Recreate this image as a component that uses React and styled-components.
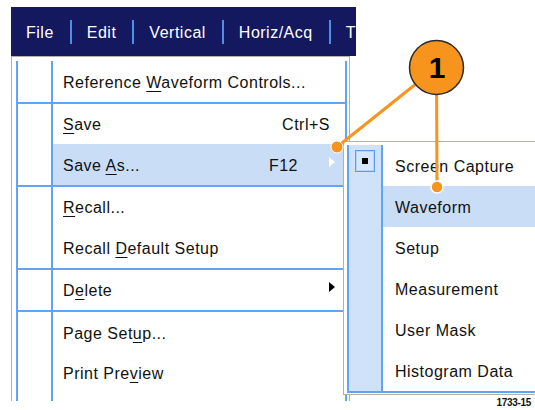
import React from "react";
import styled, { createGlobalStyle } from "styled-components";

const Global = createGlobalStyle`
  body {
    margin: 0;
    background: #fff;
    font-family: "Liberation Sans", Arial, sans-serif;
  }
`;

const NAVY = "#13185f";
const LINE = "#62a4f4";
const FRAME = "#b5b1a7";
const HILITE = "#c9ddf7";
const ORANGE = "#f7941d";

const Stage = styled.div`
  position: relative;
  width: 535px;
  height: 410px;
  overflow: hidden;
  padding-top: 7px;
  box-sizing: border-box;
  background: #fff;
`;

const Menubar = styled.div`
  margin-left: 11px;
  width: 345px;
  height: 49px;
  box-sizing: border-box;
  padding: 2px 0 0 15px;
  background: ${NAVY};
  display: flex;
  align-items: center;
  overflow: hidden;
  white-space: nowrap;
  color: #fff;
  font-size: 16px;
  letter-spacing: 0.5px;
`;

const BarSep = styled.span`
  flex: none;
  width: 2px;
  height: 24px;
  margin: -2px 15px 0 16px;
  background: #4d8fe8;
`;

const Menu = styled.div`
  margin-left: 11px;
  width: 339px;
  box-sizing: border-box;
  border: 1px solid ${FRAME};
  border-bottom: none;
  padding: 4px 2px 0 4px;
`;

const MenuInner = styled.div`
  display: flex;
  flex-direction: column;
  border-left: 2px solid ${LINE};
  border-right: 2px solid ${LINE};
`;

const Row = styled.div`
  display: flex;
  height: ${(p) => p.h || 40.5}px;
  font-size: 16px;
  letter-spacing: 0.5px;
  color: #111;
`;

const Gutter = styled.div`
  flex: none;
  width: ${(p) => p.w || 33}px;
  border-right: 2px solid ${LINE};
  background: ${(p) => (p.tint ? "#cfe2fa" : "transparent")};
  display: flex;
  justify-content: center;
  align-items: flex-start;
`;

const Cell = styled.div`
  flex: 1;
  display: flex;
  align-items: center;
  padding: 3px 10px 0 ${(p) => p.pad || 10}px;
  background: ${(p) => (p.active ? HILITE : "transparent")};
  white-space: nowrap;
`;

const Label = styled.span`
  flex: 1;
`;

const Key = styled.span`
  text-decoration: underline;
  text-underline-offset: 3px;
  text-decoration-thickness: 1px;
`;

const Shortcut = styled.span`
  margin-right: ${(p) => p.gap}px;
`;

const Arrow = styled.span`
  flex: none;
  width: 0;
  height: 0;
  margin-top: -8px;
  border-top: 5px solid transparent;
  border-bottom: 5px solid transparent;
  border-left: 6px solid ${(p) => p.color};
`;

const Separator = styled.div`
  height: 2px;
  background: ${LINE};
`;

const SubMenu = styled.div`
  position: absolute;
  left: 343px;
  top: 141px;
  width: 230px;
  background: #fff;
  border: 1px solid ${FRAME};
  border-right: none;
  padding: 3px 0 1px 3px;
`;

const SubInner = styled.div`
  border-left: 2px solid ${LINE};
  border-bottom: 2px solid ${LINE};
`;

const Checkbox = styled.span`
  margin-top: 5px;
  width: 20px;
  height: 22px;
  box-sizing: border-box;
  border: 1px solid #5a9cf0;
  box-shadow: inset 0 0 0 1px #b7d4f7;
  background: #d6e7fb;
  display: flex;
  align-items: center;
  justify-content: center;

  &::after {
    content: "";
    width: 6px;
    height: 6px;
    background: #000;
  }
`;

const Callout = styled.svg`
  position: absolute;
  left: 0;
  top: 0;
  pointer-events: none;
`;

const Caption = styled.span`
  position: absolute;
  right: 4px;
  bottom: 2px;
  font-size: 10px;
  font-weight: bold;
  letter-spacing: -0.3px;
  color: #111;
`;

const bar = ["File", "Edit", "Vertical", "Horiz/Acq", "T"];

const sub = ["Screen Capture", "Waveform", "Setup", "Measurement", "User Mask", "Histogram Data"];

function Item({ children, active, shortcut, gap, arrow, h }) {
  return (
    <Row h={h}>
      <Gutter />
      <Cell active={active}>
        <Label>{children}</Label>
        {shortcut && <Shortcut gap={gap}>{shortcut}</Shortcut>}
        {arrow && <Arrow color={arrow} />}
      </Cell>
    </Row>
  );
}

export default function App() {
  return (
    <Stage>
      <Global />
      <Menubar>
        {bar.map((b, i) => (
          <React.Fragment key={b}>
            {i > 0 && <BarSep />}
            <span>{b}</span>
          </React.Fragment>
        ))}
      </Menubar>

      <Menu>
        <MenuInner>
          <Item>Reference <Key>W</Key>aveform Controls...</Item>
          <Separator />
          <Item shortcut="Ctrl+S" gap={5}><Key>S</Key>ave</Item>
          <Item active shortcut="F12" gap={31} arrow="#fff">Save <Key>A</Key>s...</Item>
          <Separator />
          <Item><Key>R</Key>ecall...</Item>
          <Item>Recall <Key>D</Key>efault Setup</Item>
          <Separator />
          <Item arrow="#000">D<Key>e</Key>lete</Item>
          <Separator />
          <Item>Page Set<Key>u</Key>p...</Item>
          <Item>Print Pre<Key>v</Key>iew</Item>
          <Item h={8} />
        </MenuInner>
      </Menu>

      <SubMenu>
        <SubInner>
          {sub.map((s, i) => (
            <Row key={s} h={41}>
              <Gutter w={32} tint>{i === 0 && <Checkbox />}</Gutter>
              <Cell pad={12} active={i === 1}>{s}</Cell>
            </Row>
          ))}
        </SubInner>
      </SubMenu>

      <Callout width="535" height="410" viewBox="0 0 535 410">
        <line x1="436.5" y1="67.5" x2="337" y2="147" stroke={ORANGE} strokeWidth="3" />
        <line x1="436.5" y1="67.5" x2="437" y2="187" stroke={ORANGE} strokeWidth="3" />
        <circle cx="337" cy="147" r="6" fill={ORANGE} stroke="#fff" strokeWidth="1" />
        <circle cx="437" cy="187" r="6" fill={ORANGE} stroke="#fff" strokeWidth="1.5" />
        <circle cx="436.5" cy="67.5" r="27" fill={ORANGE} stroke="#2a2a2a" strokeWidth="1.5" />
        <text
          x="437"
          y="77.5"
          textAnchor="middle"
          fontFamily="Liberation Sans, Arial, sans-serif"
          fontWeight="bold"
          fontSize="30"
          fill="#000"
        >
          1
        </text>
      </Callout>

      <Caption>1733-15</Caption>
    </Stage>
  );
}
